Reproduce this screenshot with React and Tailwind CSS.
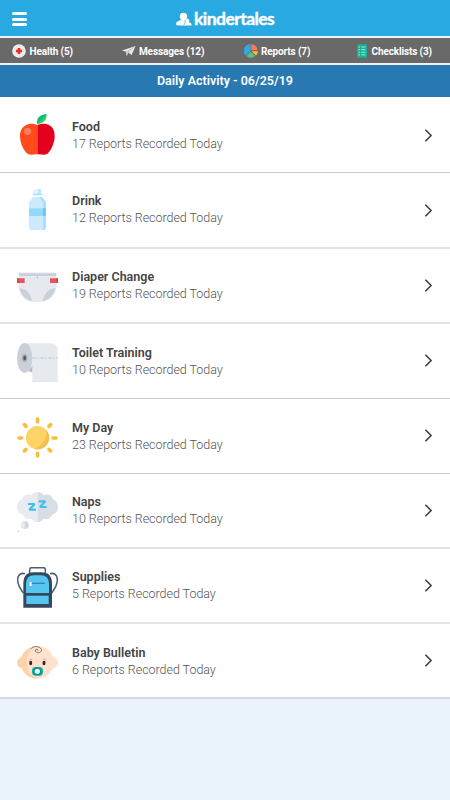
import { ChevronRight } from 'lucide-react';

function AppleIcon() {
  return (
    <svg viewBox="0 0 123 123" className="size-full">
      <path d="M60 30C58 10 70 2 88 0C90 14 82 28 60 30Z" fill="#0fb98a" />
      <path d="M60 30C70 22 80 12 88 0C90 14 82 28 60 30Z" fill="#3ccf45" />
      <path d="M61 34C52 28 38 28 28 33C14 40 9 53 9 66C9 87 20 112 33 120C43 125 52 119 61 121Z" fill="#ff4b19" />
      <path d="M61 34C70 28 86 28 96 33C109 40 113 53 113 66C113 87 102 112 90 120C80 125 70 119 61 121Z" fill="#e3001f" />
      <circle cx="32" cy="52" r="11" fill="#ff7f5c" />
    </svg>
  );
}

function BottleIcon() {
  return (
    <svg viewBox="0 0 123 123" className="size-full">
      <path d="M49 0H72V15H49Z" fill="#e0f3fe" />
      <path d="M63 0H72V15H63Z" fill="#bfe6fc" />
      <path d="M47 14H75V19H47Z" fill="#a9dffc" />
      <path d="M48 24H74L86 39V117Q86 123 80 123H43Q36 123 36 117V39Z" fill="#cbeaff" />
      <path d="M68 24H75L86 39V117Q86 123 80 123H74Q79 123 79 117V41Z" fill="#a5dcfb" />
      <path d="M36 58H86V81H36Z" fill="#94d8fb" />
      <path d="M78 58H86V81H78Z" fill="#6bc6f4" />
    </svg>
  );
}

function DiaperIcon() {
  return (
    <svg viewBox="0 0 123 123" className="size-full">
      <path d="M5 17H118V33H123V49H119C119 80 104 106 60 106C20 106 5 80 4 49H0V33H5Z" fill="#e6e9ee" />
      <path d="M6 18H117V27H6Z" fill="#c9d0da" />
      <path d="M8 17H116" stroke="#e9edf1" strokeWidth="5" strokeDasharray="5 4" />
      <path d="M61 27V36" stroke="#c3cad4" strokeWidth="3" />
      <path d="M0 34H23V48H0ZM99 34H123V48H99Z" fill="#e9545d" />
      <path d="M0 34H5V48H0ZM118 34H123V48H118Z" fill="#d0414b" />
      <path d="M7 64C27 65 40 78 45 103C26 98 12 84 7 64ZM115 64C96 65 82 78 77 103C96 98 110 84 115 64Z" fill="#c9d0da" />
    </svg>
  );
}

function ToiletRollIcon() {
  return (
    <svg viewBox="0 0 123 123" className="size-full">
      <path d="M25 4H102Q122 5 122 27V119H46V80L25 92Z" fill="#e6e9ee" />
      <path d="M34 88L46 72V91Z" fill="#b7b9bd" />
      <ellipse cx="23" cy="48" rx="23" ry="45" fill="#c9d0da" />
      <ellipse cx="23" cy="48" rx="8" ry="12" fill="#a7a9ac" />
      <ellipse cx="23" cy="48" rx="4" ry="7" fill="#555960" />
      <path d="M46 48H122" stroke="#bfc6cf" strokeWidth="3" strokeDasharray="12 4 4 4" />
      <path d="M46 119H122" stroke="#dfe3e8" strokeWidth="3" strokeDasharray="6 4" />
    </svg>
  );
}

function SunIcon() {
  return (
    <svg viewBox="0 0 123 123" className="size-full">
      <g stroke="#f7bf3a" strokeWidth="11" strokeLinecap="round">
        <path d="M61.500 6V15M61.500 109V117M6 63H14M108 63H117M22 23L27 28M101 23L96 28M22 102L27 97M101 102L96 97" />
      </g>
      <circle cx="61.500" cy="62" r="35" fill="#fdd465" />
      <path d="M88 39A35 35 0 0 1 50 95C73 91 90 68 88 39Z" fill="#f7bf4d" />
    </svg>
  );
}

function SleepIcon() {
  return (
    <svg viewBox="0 0 123 123" className="size-full">
      <path d="M61 0C52 0 46 5 43 10C31 4 17 11 16 22C6 25 0 34 0 45C0 57 7 66 18 68C21 79 32 84 43 80C47 87 54 90 61 90Z" fill="#e8ebf0" />
      <path d="M61 0C71 0 77 5 80 10C92 4 106 11 107 22C117 25 123 34 123 45C123 57 116 66 105 68C102 79 91 84 80 80C76 87 69 90 61 90Z" fill="#d7dee6" />
      <circle cx="23" cy="99" r="12" fill="#e8ebf0" />
      <path d="M23 87A12 12 0 0 1 23 111Z" fill="#d1d8e0" />
      <circle cx="4" cy="118" r="4" fill="#e6eaee" />
      <path d="M33 36H53L37 53H57M65 28H85L69 45H89" fill="none" stroke="#3fc1ee" strokeWidth="6.500" strokeLinejoin="bevel" />
    </svg>
  );
}

function BackpackIcon() {
  return (
    <svg viewBox="0 0 123 123" className="size-full">
      <path d="M24 20C4 15 0 34 3 47C5 61 12 68 19 78M99 20C119 15 123 34 120 47C118 61 111 68 104 78" fill="none" stroke="#475f73" strokeWidth="4.500" />
      <path d="M38 19V8Q38 2 44 2H79Q85 2 85 8V19" fill="none" stroke="#475f73" strokeWidth="4.500" />
      <path d="M19 122V50Q19 16 50 16H73Q105 16 105 50V122Z" fill="#36495c" />
      <path d="M27 78V51Q27 25 51 25H72Q96 25 96 51V78ZM28 86H95V111H28Z" fill="#55c5f1" />
      <path d="M43 49H84" stroke="#3787ad" strokeWidth="4" />
      <path d="M41 45V57" stroke="#eef3f5" strokeWidth="6" />
    </svg>
  );
}

function BabyIcon() {
  return (
    <svg viewBox="0 0 123 123" className="size-full">
      <ellipse cx="14" cy="62" rx="14" ry="16" fill="#ffd3aa" />
      <ellipse cx="109" cy="62" rx="14" ry="16" fill="#ffe1cd" />
      <ellipse cx="61" cy="61" rx="50" ry="49" fill="#ffe1cd" />
      <path d="M61 12C32 13 11 34 11 61S32 109 61 110C38 102 29 84 29 61S40 19 61 12Z" fill="#ffd3aa" />
      <path d="M43 20C47 11 68 11 73 22C75 32 61 36 55 28C53 20 64 20 63 26" fill="none" stroke="#8b7772" strokeWidth="3" />
      <path d="M36 55Q41 48 46 53M77 53Q82 48 87 55" fill="none" stroke="#f4a09a" strokeWidth="3" />
      <ellipse cx="41" cy="63" rx="4.500" ry="7" fill="#3b2425" />
      <ellipse cx="81" cy="63" rx="4.500" ry="7" fill="#3b2425" />
      <rect x="45" y="75" width="33" height="26" rx="11" fill="#05b594" />
      <circle cx="61" cy="88" r="10" fill="#e7f5f8" stroke="#0c8e9f" strokeWidth="4" />
    </svg>
  );
}

function HealthIcon() {
  return (
    <svg viewBox="0 0 14 14" className="size-3.5">
      <circle cx="7" cy="7" r="6.800" fill="#ececec" />
      <path d="M5.700 3.900H8.300V5.700H10.100V8.300H8.300V10.100H5.700V8.300H3.900V5.700H5.700Z" fill="#ee2b2b" />
    </svg>
  );
}

function SendIcon() {
  return (
    <svg viewBox="0 0 14 12" className="h-3 w-3.5">
      <path d="M0 5.400L13.500 1L9.600 10L6.200 7.600L4.800 11L4 6.800Z" fill="#e8e8e8" />
      <path d="M4 6.800L13.500 1L6.200 7.600L4.800 11Z" fill="#c6c6c6" />
    </svg>
  );
}

function PieIcon() {
  return (
    <svg viewBox="0 0 14 14" className="size-3.5">
      <path d="M6.500 7V.3A6.600 6.600 0 0 0 1.800 11.600Z" fill="#30a9e5" />
      <path d="M7.300 6.300V.3A6 6 0 0 1 13.500 6.300Z" fill="#fb7861" />
      <path d="M7.600 7.200H13.800A6 6 0 0 1 11.900 11.500Z" fill="#fbbf29" />
      <path d="M6.800 7.700L11.200 12.100A6.600 6.600 0 0 1 2.400 12.100Z" fill="#5fbe7b" />
    </svg>
  );
}

function ChecklistIcon() {
  return (
    <svg viewBox="0 0 10 14" className="h-3.5 w-2.5">
      <rect width="10" height="13.500" rx="1" y=".3" fill="#17b394" />
      <path d="M1.500 3H3M1.500 5.600H3M1.500 8.200H3M1.500 10.800H3M4.300 3H8.500M4.300 5.600H8.500M4.300 8.200H8.500M4.300 10.800H8.500" stroke="#a9e5d8" strokeWidth="1" />
    </svg>
  );
}

const tabs = [
  { label: 'Health (5)', icon: HealthIcon, box: 'w-[110px] gap-[3.5px]' },
  { label: 'Messages (12)', icon: SendIcon, box: 'w-[122px] gap-[3px]' },
  { label: 'Reports (7)', icon: PieIcon, box: 'w-[113px] gap-[3px]' },
  { label: 'Checklists (3)', icon: ChecklistIcon, box: 'gap-[4.5px]' },
];

const thin = 'border-b border-[#cbcbcb]';
const soft = 'border-b-2 border-[#e4e4e4]';

const activities = [
  { title: 'Food', count: 17, icon: AppleIcon, row: `h-[76px] ${thin}`, iconPad: 'pt-[17px]', textPad: 'pt-[22px]', arrowPad: 'pt-[27.5px]' },
  { title: 'Drink', count: 12, icon: BottleIcon, row: `h-[76px] ${soft}`, iconPad: 'pt-[16px]', textPad: 'pt-5', arrowPad: 'pt-[26.5px]' },
  { title: 'Diaper Change', count: 19, icon: DiaperIcon, row: `h-[75px] ${soft}`, iconPad: 'pt-[18px]', textPad: 'pt-5', arrowPad: 'pt-[25.5px]' },
  { title: 'Toilet Training', count: 10, icon: ToiletRollIcon, row: `h-[75px] ${thin}`, iconPad: 'pt-[18px]', textPad: 'pt-[21px]', arrowPad: 'pt-[26px]' },
  { title: 'My Day', count: 23, icon: SunIcon, row: `h-[75px] ${thin}`, iconPad: 'pt-[18px]', textPad: 'pt-[21px]', arrowPad: 'pt-[26px]' },
  { title: 'Naps', count: 10, icon: SleepIcon, row: `h-[75px] ${soft}`, iconPad: 'pt-[18px]', textPad: 'pt-5', arrowPad: 'pt-[25.5px]' },
  { title: 'Supplies', count: 5, icon: BackpackIcon, row: `h-[75px] ${soft}`, iconPad: 'pt-[18px]', textPad: 'pt-5', arrowPad: 'pt-[25.5px]' },
  { title: 'Baby Bulletin', count: 6, icon: BabyIcon, row: 'h-[75px] border-b-2 border-[#d5dade]', iconPad: 'pt-[18px]', textPad: 'pt-[21px]', arrowPad: 'pt-[26px]' },
];

function Header() {
  return (
    <header className="flex h-9 items-center bg-[#29a9e1]">
      <button className="ml-3 mt-[2px] flex w-[15px] flex-col gap-[2.5px]" aria-label="Menu">
        <span className="h-[3px] rounded-full bg-white" />
        <span className="h-[3px] rounded-full bg-white" />
        <span className="h-[3px] rounded-full bg-white" />
      </button>
      <div className="ml-[149px] flex items-center pt-[2px]">
        <svg viewBox="0 0 16 14" className="h-3.5 w-4" fill="#fff">
          <path d="M3.700 4A3.800 3.800 0 0 1 11.200 4C11.200 6 10.200 6.800 9.700 8.200L9.300 13.500H1.800C-.6 13.500-.2 10 1.900 9.200C3.800 8.500 5.200 8.500 4.700 7.300C4 6.300 3.700 5.300 3.700 4Z" />
          <path d="M8.800 8.300A2.300 2.300 0 0 1 13.300 8.300C13.300 9.300 12.800 9.700 13.100 10.300C14.400 10.900 15.800 11.200 15.600 13.500H8.200C8 11.500 9 10.500 8.800 8.300Z" />
          <path d="M9 7.500C9.600 9.700 9 11 7.800 13.500" fill="none" stroke="#29a9e1" strokeWidth=".7" />
        </svg>
        <span className="ml-[2px] font-['Lato',sans-serif] text-[17.5px] font-bold leading-5 tracking-[-0.55px] text-white [-webkit-text-stroke:0.4px_white]">kindertales</span>
      </div>
    </header>
  );
}

export default function App() {
  return (
    <div className="min-h-screen w-full bg-[#eaf2fb] font-['Roboto',sans-serif]">
      <Header />
      <nav className="flex h-[29px] items-center border-b-2 border-t-2 border-[#eef2f4] bg-[#696969] pl-3 text-[10px] font-bold tracking-[-0.13px] text-white">
        {tabs.map(({ label, icon: Icon, box }) => (
          <div key={label} className={`flex items-center whitespace-nowrap ${box}`}>
            <Icon />
            <span className="pt-px">{label}</span>
          </div>
        ))}
      </nav>
      <div className="flex h-8 items-center justify-center bg-[#2879b1] text-[12.5px] font-semibold text-white">
        Daily Activity - 06/25/19
      </div>
      <main>
        {activities.map(({ title, count, icon: Icon, row, iconPad, textPad, arrowPad }) => (
          <div key={title} className={`flex bg-white pl-[17px] pr-[11px] ${row}`}>
            <div className={`h-[58px] w-[41px] ${iconPad}`}>
              <div className="size-[41px]">
                <Icon />
              </div>
            </div>
            <div className={`ml-[14px] flex-1 ${textPad}`}>
              <h2 className="text-[12.5px] font-semibold leading-[15px] text-[#444]">{title}</h2>
              <p className="mt-[2px] text-[12.5px] font-light leading-[16px] tracking-[-0.04px] text-[#555]">{count} Reports Recorded Today</p>
            </div>
            <div className={arrowPad}>
              <ChevronRight className="size-[21px] text-[#444]" strokeWidth={2} />
            </div>
          </div>
        ))}
      </main>
    </div>
  );
}
